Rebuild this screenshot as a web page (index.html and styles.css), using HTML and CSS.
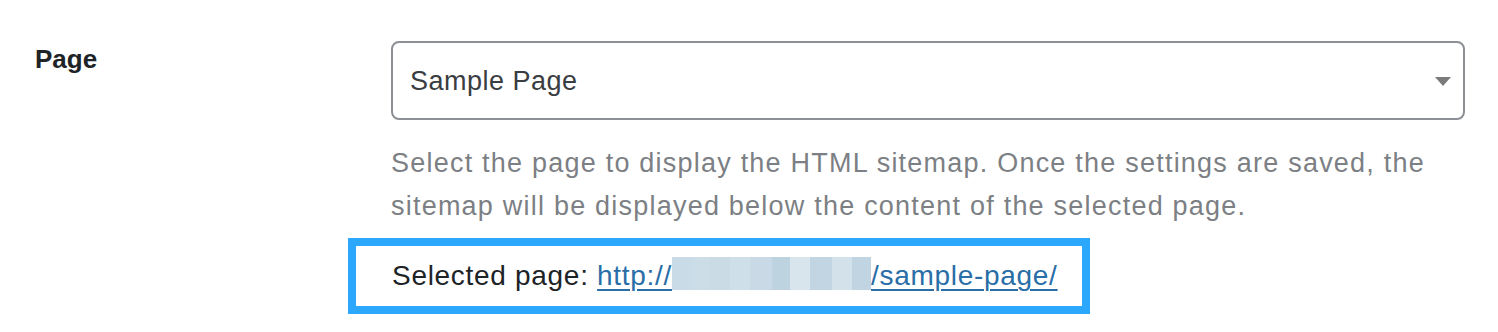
FILE: index.html
```html
<!DOCTYPE html>
<html lang="en">
<head>
<meta charset="utf-8">
<title>HTML Sitemap Page</title>
<link rel="stylesheet" href="styles.css">
</head>
<body>
<div class="form-row">
  <div class="row-label">Page</div>
  <div class="row-field">
    <div class="select">
      <span class="select-value">Sample Page</span>
      <svg class="select-arrow" width="16" height="9" viewBox="0 0 16 9" aria-hidden="true"><path d="M0 0 H16 L8 9 Z" fill="#7b7b7b"/></svg>
    </div>
    <p class="description">Select the page to display the HTML sitemap. Once the settings are saved, the sitemap will be displayed below the content of the selected page.</p>
    <div class="highlight">
      <p class="selected">Selected page: <a class="link" href="#">http://<span class="blur"></span>/sample-page/</a></p>
    </div>
  </div>
</div>
</body>
</html>
```

FILE: styles.css
```css
html, body {
  margin: 0;
  padding: 0;
  background: #ffffff;
}

body {
  font-family: "Liberation Sans", Arial, sans-serif;
  color: #1d2327;
}

.form-row {
  display: flex;
  align-items: flex-start;
}

.row-label {
  box-sizing: border-box;
  width: 391px;
  padding: 44px 0 0 35px;
  font-size: 26px;
  line-height: 30px;
  font-weight: bold;
  color: #1d2327;
}

.row-field {
  width: 1074px;
  padding-top: 41px;
}

.select {
  box-sizing: border-box;
  height: 79px;
  border: 2px solid #8c8f94;
  border-radius: 8px;
  display: flex;
  align-items: center;
  justify-content: space-between;
  padding: 0 12px 0 17px;
  background: #ffffff;
}

.select-value {
  font-size: 27px;
  letter-spacing: 0.5px;
  color: #3a3d41;
  padding-top: 2px;
}

.select-arrow {
  display: block;
  margin-top: 1px;
}

.description {
  margin: 22px 0 0 0;
  font-size: 27px;
  line-height: 43px;
  letter-spacing: 1.22px;
  color: #7c7f84;
}

.highlight {
  display: inline-block;
  margin: 10px 0 0 -43px;
  border: 8px solid #2ba8fb;
  padding: 0 24px 0 36px;
}

.selected {
  margin: 0;
  font-size: 28px;
  line-height: 60px;
  letter-spacing: 0.7px;
  color: #1d2327;
  white-space: nowrap;
}

.link {
  color: #2a6ea8;
  text-decoration: underline;
  text-decoration-thickness: 2px;
  text-underline-offset: 4px;
}

.blur {
  display: inline-block;
  width: 199px;
  height: 33px;
  vertical-align: -5px;
  background: linear-gradient(to right,
    #c9dbe7 0, #c9dbe7 20px,
    #cddde8 20px, #cddde8 37px,
    #cbdbe6 37px, #cbdbe6 58px,
    #cfdfe9 58px, #cfdfe9 78px,
    #c9dae6 78px, #c9dae6 100px,
    #bdd3e0 100px, #bdd3e0 118px,
    #d8e5ed 118px, #d8e5ed 138px,
    #c2d5e2 138px, #c2d5e2 160px,
    #d2e1ea 160px, #d2e1ea 180px,
    #c0d4e1 180px, #c0d4e1 199px);
}
```
